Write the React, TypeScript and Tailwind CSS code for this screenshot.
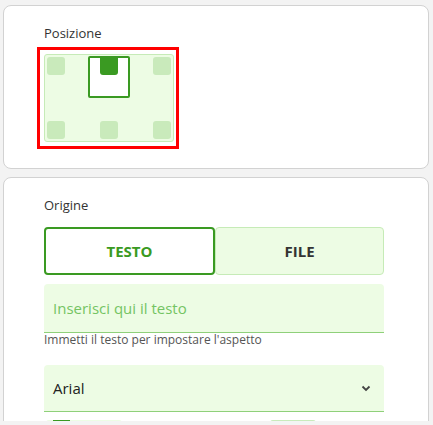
import React from "react";

const Square = ({ className = "" }: { className?: string }) => (
  <div className={`w-[18px] h-[18px] rounded-[3px] bg-[#c9eabb] ${className}`} />
);

export default function App() {
  return (
    <div
      className="w-[433px] h-[425px] bg-[#f3f3f3] text-[#333]"
      style={{ fontFamily: '"Open Sans", "Noto Sans", sans-serif' }}
    >
      <div className="h-[421px] overflow-hidden pt-[5px] pl-[3px] pr-[4px] flex flex-col gap-[8px]">
        {/* Posizione */}
        <div className="shrink-0 bg-white border border-[#d2d2d2] rounded-[8px] h-[164px] pt-[18px] pl-[40px]">
          <p className="text-[13px] leading-[18px] font-medium text-[#333]">Posizione</p>
          {/* red highlight around the picker */}
          <div className="mt-[5px] -ml-[7px] w-fit border-[3px] border-[#ff0000] pl-[4px] pr-[2px] pt-[4px] pb-[4px]">
            <div className="w-[130px] h-[88px] rounded-[3px] border border-[#c6ebb7] bg-[#edfce4] px-[2px] pt-[1px] pb-[2px] flex flex-col justify-between">
              <div className="flex justify-between items-start">
                <Square className="mt-px" />
                <div className="w-[42px] h-[42px] border-2 border-[#3a9a22] bg-white rounded-[2px] flex justify-center">
                  <div className="w-[18px] h-[17px] bg-[#3a9a22] rounded-b-[3px]" />
                </div>
                <Square className="mt-px" />
              </div>
              <div className="flex justify-between">
                <Square />
                <Square />
                <Square />
              </div>
            </div>
          </div>
        </div>

        {/* Origine */}
        <div className="shrink-0 bg-white border border-[#d2d2d2] rounded-[8px] pt-[18px] pl-[40px] pb-[20px]">
          <p className="text-[13px] leading-[18px] font-medium text-[#333]">Origine</p>
          <div className="mt-[13px] w-[340px] flex">
            <button className="flex-1 h-[48px] rounded-[4px] border-2 border-[#3a9a22] bg-white text-[15px] font-bold text-[#3a9a22]">
              TESTO
            </button>
            <button className="flex-1 h-[48px] rounded-[4px] border border-[#c6ebb7] bg-[#edfce4] text-[15px] font-bold text-[#333]">
              FILE
            </button>
          </div>

          <div className="mt-[9px] w-[340px]">
            <div className="h-[49px] rounded-t-[4px] bg-[#edfce4] border-b border-[#8fd07a] flex items-center pl-[9px]">
              <span className="text-[15px] text-[#74c463]">Inserisci qui il testo</span>
            </div>
            <p className="text-[12px] leading-[14px] text-[#555]">Immetti il testo per impostare l'aspetto</p>
          </div>

          <div className="mt-[18px] w-[340px] h-[47px] rounded-t-[4px] bg-[#edfce4] border-b border-[#8fd07a] flex items-center justify-between pl-[9px] pr-[13px]">
            <span className="text-[15px] text-[#222]">Arial</span>
            <svg width="10" height="7" viewBox="0 0 10 7" fill="none">
              <path d="M1.5 1.5 L5 5 L8.5 1.5" stroke="#444" strokeWidth="1.8" />
            </svg>
          </div>

          <div className="mt-[8px] flex items-start">
            <div className="ml-[2px] w-[76px] h-[24px] rounded-[3px] bg-[#edfce4] pl-[7px]">
              <div className="w-[17px] h-[24px] bg-[#3a9a22]" />
            </div>
            <div className="ml-[148px] w-[46px] h-[24px] rounded-[3px] bg-[#c9eabb]" />
          </div>
        </div>
      </div>
    </div>
  );
}
